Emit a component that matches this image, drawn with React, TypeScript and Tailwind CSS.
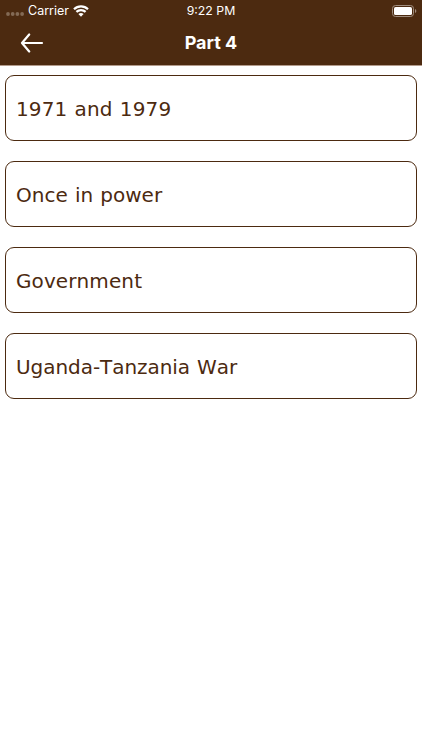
const sections = [
  { title: '1971 and 1979', spacing: 'tracking-[0.15px]' },
  { title: 'Once in power', spacing: 'tracking-[0.04px]' },
  { title: 'Government', spacing: 'tracking-[0.1px]' },
  { title: 'Uganda-Tanzania War', spacing: 'tracking-[-0.05px]' },
];

const StatusBar = () => (
  <div className="grid h-5 grid-cols-3 items-center text-white font-['Inter',sans-serif]">
    <div className="flex items-center pl-[6px]">
      <svg width="18" height="4" viewBox="0 0 18 4" className="mt-[7px] fill-[#836a55]">
        <circle cx="2" cy="2" r="1.9" />
        <circle cx="6.7" cy="2" r="1.9" />
        <circle cx="11.4" cy="2" r="1.9" />
        <circle cx="16.1" cy="2" r="1.9" />
      </svg>
      <span className="ml-1 pt-px text-[12.5px] leading-5">Carrier</span>
      <svg width="16" height="12" viewBox="0 0 16 12" className="ml-1 fill-none stroke-white">
        <path d="M1 4.2a10 10 0 0 1 14 0M3.4 6.9a6.6 6.6 0 0 1 9.2 0" strokeWidth="2.2" />
        <path d="M5.4 9.1a3.8 3.8 0 0 1 5.2 0L8 11.8Z" className="fill-white stroke-none" />
      </svg>
    </div>
    <span className="pt-px text-center text-[12.3px] leading-5">9:22 PM</span>
    <div className="flex justify-end pr-[5px]">
      <svg width="25" height="12" viewBox="0 0 25 12">
        <rect x="0.5" y="0.5" width="21" height="11" rx="3" fill="none" stroke="#a08d7e" />
        <rect x="2" y="2" width="18" height="8" rx="1.6" fill="#fff" />
        <path d="M23 4v4c1.8-.7 1.8-3.3 0-4Z" fill="#a08d7e" />
      </svg>
    </div>
  </div>
);

const Header = () => (
  <header className="h-[66px] border-b border-[#b39b8b] bg-[#4c2a10]">
    <StatusBar />
    <div className="grid h-[45px] grid-cols-3 items-center">
      <button className="pl-5" aria-label="Back">
        <svg width="24" height="20" viewBox="0 0 24 20" className="fill-none stroke-white" strokeWidth="2.2" strokeLinecap="round" strokeLinejoin="round">
          <path d="M22 10H2M9.2 1.5L2 10l7.2 8.5" />
        </svg>
      </button>
      <h1 className="text-center text-[18px] font-bold text-white font-['Inter',sans-serif]">Part 4</h1>
    </div>
  </header>
);

const App = () => {
  return (
    <div className="min-h-screen bg-white">
      <Header />
      <main className="flex flex-col gap-5 px-[5px] pt-[9px]">
        {sections.map(({ title, spacing }) => (
          <button
            key={title}
            className={`flex h-[66px] items-center rounded-[9px] border border-[#4c2a10] px-[10px] pt-[2px] text-left text-[20px] text-[#4c2a10] [font-kerning:none] [word-spacing:0.6px] font-['DejaVu_Sans',sans-serif] ${spacing}`}
          >
            {title}
          </button>
        ))}
      </main>
    </div>
  );
};

export default App;
